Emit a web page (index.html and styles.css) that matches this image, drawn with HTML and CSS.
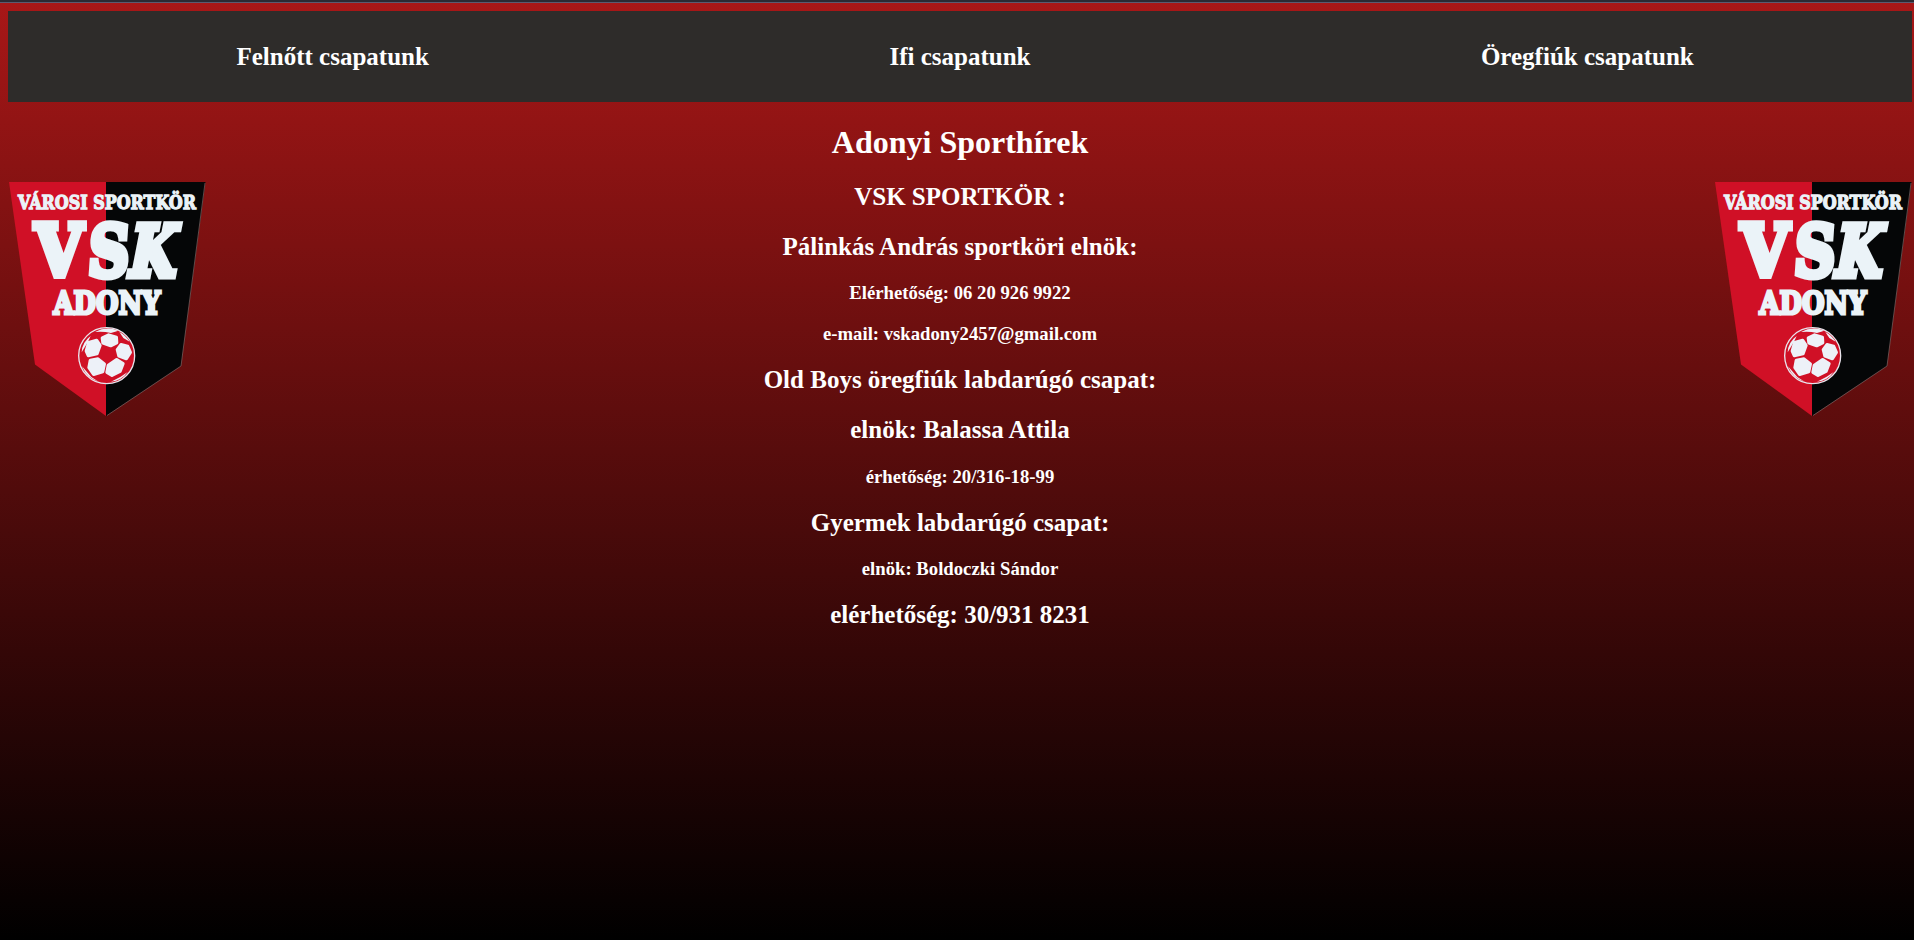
FILE: index.html
```html
<!DOCTYPE html>
<html lang="hu">
<head>
<meta charset="utf-8">
<title>Adonyi Sporthírek</title>
<link rel="stylesheet" href="styles.css">
</head>
<body>
<div class="topline"></div>
<nav class="nav">
  <a class="nav-link">Felnőtt csapatunk</a>
  <a class="nav-link">Ifi csapatunk</a>
  <a class="nav-link">Öregfiúk csapatunk</a>
</nav>
<main class="content">
  <svg class="crest" viewBox="8 181 198 236">
    <defs>
      <g id="crest">
        <path d="M9 182H106V416L35 364.500Z" fill="#d01026"/>
        <path d="M106 182H205.500L181 366L106 416Z" fill="#050607"/>
        <path d="M205 183L181 366L107 415.500" fill="none" stroke="#8a7776" stroke-width=".6"/>
        <g class="crest-text">
          <text class="crest-top" x="18" y="208.700" textLength="178" lengthAdjust="spacingAndGlyphs">VÁROSI SPORTKÖR</text>
          <text class="crest-big" x="35" y="276" textLength="48" lengthAdjust="spacingAndGlyphs">V</text>
          <text class="crest-big" transform="translate(87 276) skewX(-4)" textLength="41" lengthAdjust="spacingAndGlyphs">S</text>
          <text class="crest-big" transform="translate(126 276) skewX(-11)" textLength="46" lengthAdjust="spacingAndGlyphs">K</text>
          <text class="crest-mid" x="53.500" y="314.300" textLength="107" lengthAdjust="spacingAndGlyphs">ADONY</text>
        </g>
        <g transform="translate(0 290) scale(.33333)">
          <circle cx="320" cy="197" r="84" fill="#d01026" stroke="#e9e4ec" stroke-width="4"/>
          <g fill="#edf1f8" stroke="#edf1f8" stroke-width="10" stroke-linejoin="round">
            <path d="M307 144L326 135L349 142L350 158L332 167L309 159Z"/>
            <path d="M266 158L290 151L300 166L291 191L265 197L259 183Z"/>
            <path d="M271 211L294 207L313 222L308 245L281 253L267 233Z"/>
            <path d="M325 226L350 209L369 221L360 244L336 256L321 247Z"/>
            <path d="M352 179L363 164L383 169L391 187L379 206L357 198Z"/>
          </g>
          <g fill="#edf1f8">
            <path d="M285 126Q319 108 355 122L333 129Q309 123 285 126Z"/>
            <path d="M358 126Q377 136 389 155L370 144Z"/>
            <path d="M245 187Q246 157 272 138L264 155Z"/>
            <path d="M246 229Q261 266 296 275L274 261Z"/>
            <path d="M333 275Q365 272 383 246L362 260Z"/>
          </g>
        </g>
      </g>
    </defs>
    <use href="#crest"/>
  </svg>
  <section class="info">
    <h1>Adonyi Sporthírek</h1>
    <h2>VSK SPORTKÖR :</h2>
    <h2>Pálinkás András sportköri elnök:</h2>
    <h3>Elérhetőség: 06 20 926 9922</h3>
    <h3>e-mail: vskadony2457@gmail.com</h3>
    <h2>Old Boys öregfiúk labdarúgó csapat:</h2>
    <h2>elnök: Balassa Attila</h2>
    <h3>érhetőség: 20/316-18-99</h3>
    <h2>Gyermek labdarúgó csapat:</h2>
    <h3>elnök: Boldoczki Sándor</h3>
    <h2>elérhetőség: 30/931 8231</h2>
  </section>
  <svg class="crest" viewBox="8 181 198 236"><use href="#crest"/></svg>
</main>
</body>
</html>
```
FILE: styles.css
```css
html { height: 100%; }
body {
  margin: 0;
  box-sizing: border-box;
  height: 940px;
  overflow: hidden;
  color: #fff;
  font-family: "Liberation Serif", "Times New Roman", serif;
  background: linear-gradient(#a81717, #000);
}
.topline {
  height: 2px;
  background: #2b2a33;
  border-bottom: 1px solid #5b5b70;
}
.nav {
  display: flex;
  box-sizing: border-box;
  height: 91px;
  margin: 8px 2px 0 8px;
  padding: 31px 11px 0;
  background: #2e2c2a;
}
.nav-link {
  flex: 1;
  font-size: 25px;
  font-weight: bold;
  line-height: 29px;
  text-align: center;
}
.content {
  display: flex;
  justify-content: space-between;
  align-items: flex-start;
  margin: 0 2px 0 8px;
}
.crest {
  width: 198px;
  height: 236px;
  margin-top: 79px;
}
.crest-text {
  fill: #ebf3f8;
  stroke: #ebf3f8;
  font-family: "DejaVu Serif", serif;
  font-weight: bold;
}
.crest-top { font-size: 18.500px; stroke-width: 1.300px; }
.crest-big { font-size: 70.500px; stroke-width: 7px; }
.crest-mid { font-size: 31px; stroke-width: 3px; }
.info { text-align: center; }
h1 { margin: 22.440px 0 20px; font-size: 32px; line-height: 37px; }
h2 { margin: 20.750px 0; font-size: 25px; line-height: 29px; }
h3 { margin: 18.720px 0; font-size: 18.720px; line-height: 22px; }
h2 + h3 { padding-top: .8px; }
h3 + h2 { margin-top: 20px; }
```
